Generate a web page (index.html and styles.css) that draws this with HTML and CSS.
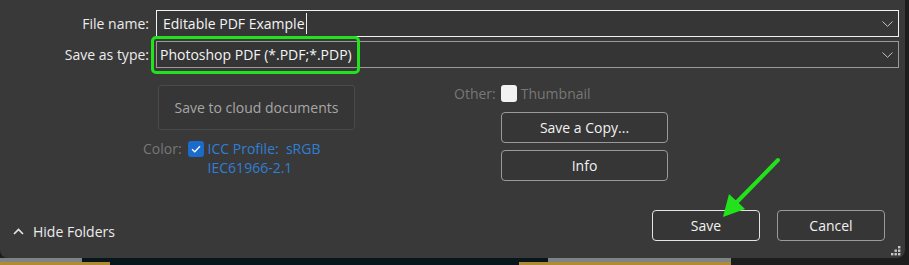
FILE: index.html
```html
<!DOCTYPE html>
<html>
<head>
<meta charset="utf-8">
<link rel="stylesheet" href="styles.css">
</head>
<body>
<div class="page">
  <div class="dialog">
    <div class="field-row">
      <label class="lbl">File name:</label>
      <div class="field field-active">
        <span class="val">Editable PDF Example</span><span class="caret"></span>
        <svg class="chev" width="11" height="6" viewBox="0 0 11 6"><path d="M0.5 0.5 L5.5 5.3 L10.5 0.5" fill="none" stroke="#c4c4c4" stroke-width="1"/></svg>
      </div>
    </div>
    <div class="field-row">
      <label class="lbl">Save as type:</label>
      <div class="field field-type">
        <span class="val">Photoshop PDF (*.PDF;*.PDP)</span>
        <svg class="chev" width="11" height="6" viewBox="0 0 11 6"><path d="M0.5 0.5 L5.5 5.3 L10.5 0.5" fill="none" stroke="#c4c4c4" stroke-width="1"/></svg>
        <div class="highlight"></div>
      </div>
    </div>

    <div class="options">
      <div class="col-left">
        <div class="cloud-btn">Save to cloud documents</div>
        <div class="color-row">
          <span class="dim">Color:</span>
          <span class="check-blue">
            <svg width="10" height="8" viewBox="0 0 10 8"><path d="M1 4.2 L3.8 6.8 L9 1.2" fill="none" stroke="#fff" stroke-width="1.3"/></svg>
          </span>
          <span class="icc">ICC Profile:&nbsp; sRGB<br>IEC61966-2.1</span>
        </div>
      </div>
      <div class="col-mid">
        <div class="other-row">
          <span class="dim">Other:</span>
          <span class="check-white"></span>
          <span class="dim">Thumbnail</span>
        </div>
        <div class="btn-stack">
          <div class="btn">Save a Copy...</div>
          <div class="btn">Info</div>
        </div>
      </div>
    </div>

    <div class="footer">
      <div class="hide-folders">
        <svg width="11" height="7" viewBox="0 0 11 7"><path d="M1 6 L5.5 1.5 L10 6" fill="none" stroke="#e6e6e6" stroke-width="1.6"/></svg>
        <span>Hide Folders</span>
      </div>
      <div class="actions">
        <div class="btn btn-main">Save</div>
        <div class="btn">Cancel</div>
      </div>
    </div>

    <svg class="grip" width="10" height="10" viewBox="0 0 10 10">
      <rect x="7" y="0" width="2.4" height="2.4" fill="#c8c8c8"/>
      <rect x="3.5" y="3.5" width="2.4" height="2.4" fill="#c8c8c8"/>
      <rect x="7" y="3.5" width="2.4" height="2.4" fill="#c8c8c8"/>
      <rect x="0" y="7" width="2.4" height="2.4" fill="#c8c8c8"/>
      <rect x="3.5" y="7" width="2.4" height="2.4" fill="#c8c8c8"/>
      <rect x="7" y="7" width="2.4" height="2.4" fill="#c8c8c8"/>
    </svg>

    <svg class="arrow" width="909" height="265" viewBox="0 0 909 265">
      <line x1="778" y1="160" x2="733" y2="206" stroke="#22e31b" stroke-width="4" stroke-linecap="round"/>
      <polygon points="723,217 729,194 745,209" fill="#22e31b"/>
    </svg>
  </div>
  <div class="backdrop"></div>
</div>
</body>
</html>
```

FILE: styles.css
```css
* { box-sizing: border-box; }
html, body { margin: 0; padding: 0; }
body {
  width: 909px;
  height: 265px;
  overflow: hidden;
  background: #1d1d1d;
  font-family: "Open Sans", "Noto Sans", sans-serif;
  font-size: 14px;
  color: #ececec;
}
.page {
  display: flex;
  flex-direction: column;
  width: 909px;
  height: 265px;
}
.dialog {
  position: relative;
  width: 905px;
  height: 258px;
  background: #393939;
  border-radius: 0 0 8px 8px;
  padding: 10px 6px 17px 0;
  display: flex;
  flex-direction: column;
  gap: 4px;
}
.field-row {
  display: flex;
  align-items: center;
  height: 27px;
}
.lbl {
  width: 150px;
  padding-right: 1px;
  text-align: right;
  white-space: nowrap;
  color: #ececec;
}
.field {
  position: relative;
  margin-left: 6px;
  flex: 1;
  height: 27px;
  display: flex;
  align-items: center;
  padding-left: 6px;
  background: #363636;
}
.field-active { border: 1px solid #f2f2f2; }
.field-type { border: 1px solid #9a9a9a; padding-left: 3px; background: #353535; }
.val { color: #f4f4f4; white-space: nowrap; }
.caret {
  display: inline-block;
  width: 1px;
  height: 21px;
  background: #f0f0f0;
  margin-left: 1px;
}
.chev {
  position: absolute;
  right: 5px;
  top: 10px;
}
.highlight {
  position: absolute;
  left: -6px;
  top: -6px;
  width: 209px;
  height: 38px;
  border: 3px solid #22e31b;
  border-radius: 5px;
}
.options {
  height: 139px;
  display: flex;
  padding-left: 143px;
}
.col-left {
  width: 311px;
  display: flex;
  flex-direction: column;
}
.cloud-btn {
  margin-top: 13px;
  margin-left: 15px;
  width: 197px;
  height: 45px;
  border: 1px solid #4a4a4a;
  border-radius: 3px;
  background: #363636;
  color: #a6a6a6;
  display: flex;
  align-items: center;
  justify-content: center;
  white-space: nowrap;
}
.color-row {
  margin-top: 9px;
  display: flex;
  align-items: flex-start;
  line-height: 19px;
}
.dim { color: #777; white-space: nowrap; }
.check-blue {
  width: 16px;
  height: 16px;
  margin: 2px 4px 0 6px;
  background: #1a6bcc;
  border-radius: 3px;
  display: flex;
  align-items: center;
  justify-content: center;
}
.icc { color: #2f7fd6; }
.col-mid {
  display: flex;
  flex-direction: column;
}
.other-row {
  margin-top: 11px;
  display: flex;
  align-items: center;
  height: 21px;
}
.check-white {
  width: 16px;
  height: 17px;
  margin: 0 4px 0 5px;
  background: #f2f2f2;
  border-radius: 3px;
}
.btn-stack {
  margin-top: 8px;
  margin-left: 47px;
  display: flex;
  flex-direction: column;
  gap: 7px;
}
.btn {
  width: 167px;
  height: 31px;
  border: 1px solid #9a9a9a;
  border-radius: 4px;
  background: #363636;
  color: #f2f2f2;
  display: flex;
  align-items: center;
  justify-content: center;
  white-space: nowrap;
}
.footer {
  height: 31px;
  display: flex;
  justify-content: space-between;
  align-items: flex-end;
  padding-left: 13px;
  padding-right: 14px;
}
.hide-folders {
  display: flex;
  align-items: center;
  gap: 9px;
  height: 20px;
  margin-bottom: 0;
  color: #ececec;
}
.actions {
  display: flex;
  gap: 17px;
}
.actions .btn { width: 108px; }
.btn-main { border-color: #e4e4e4; }
.grip {
  position: absolute;
  right: 4px;
  bottom: 2px;
}
.arrow {
  position: absolute;
  left: 0;
  top: 0;
  pointer-events: none;
}
.backdrop {
  width: 909px;
  height: 7px;
  background:
    linear-gradient(#b08a35, #b08a35) 0 4px / 110px 3px no-repeat,
    linear-gradient(#b08a35, #b08a35) 519px 4px / 212px 3px no-repeat,
    linear-gradient(#7d8386, #7d8386) 0 0 / 82px 4px no-repeat,
    linear-gradient(#7d8386, #7d8386) 548px 0 / 183px 4px no-repeat,
    linear-gradient(#08151b, #08151b) 0 0 / 731px 7px no-repeat,
    #1d1d1d;
}
```
